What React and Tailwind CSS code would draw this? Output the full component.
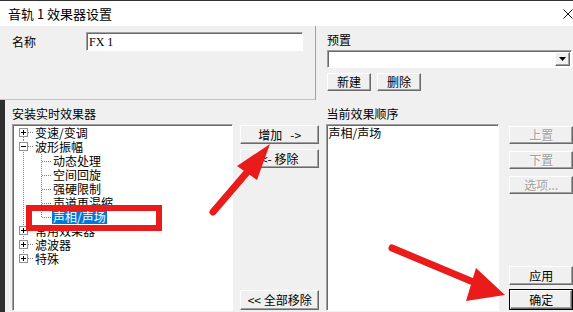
import React from "react";

const TREE = [
  { label: "变速/变调", level: 0, toggle: "+", first: true },
  { label: "波形振幅", level: 0, toggle: "-" },
  { label: "动态处理", level: 1 },
  { label: "空间回旋", level: 1 },
  { label: "强硬限制", level: 1 },
  { label: "声道再混缩", level: 1 },
  { label: "声相/声场", level: 1, lastChild: true, selected: true },
  { label: "常用效果器", level: 0, toggle: "+" },
  { label: "滤波器", level: 0, toggle: "+" },
  { label: "特殊", level: 0, toggle: "+", last: true },
];

const raised =
  "border border-t-white border-l-white border-b-[#696969] border-r-[#696969] shadow-[inset_-1px_-1px_0_#a0a0a0] bg-[#f0f0f0]";
const sunken =
  "border border-t-[#a0a0a0] border-l-[#a0a0a0] border-b-white border-r-white shadow-[inset_1px_1px_0_#696969] bg-white";

function Btn({ children, className = "", disabled, isDefault }) {
  const text = disabled ? "text-[#a0a0a0] [text-shadow:1px_1px_0_#fff]" : "text-black";
  if (isDefault) {
    return (
      <div className={`border border-black ${className}`}>
        <div className={`${raised} ${text} flex h-full w-full items-center justify-center leading-none`}>
          {children}
        </div>
      </div>
    );
  }
  return (
    <div className={`${raised} ${text} flex items-center justify-center leading-none ${className}`}>
      {children}
    </div>
  );
}

function Gutter({ row }) {
  const w = row.level === 0 ? 21 : 39;
  const dot = { stroke: "#808080", strokeDasharray: "1 1", shapeRendering: "crispEdges" };
  return (
    <svg width={w} height="14" className="shrink-0">
      <line x1="10.5" y1={row.first ? 7 : 0} x2="10.5" y2={row.last ? 7 : 14} style={dot} />
      {row.level === 0 ? (
        <>
          <line x1="15" y1="6.5" x2="20" y2="6.5" style={dot} />
          <rect x="6.5" y="2.5" width="8" height="8" fill="#fff" stroke="#919191" shapeRendering="crispEdges" />
          <line x1="8" y1="6.5" x2="13" y2="6.5" stroke="#000" shapeRendering="crispEdges" />
          {row.toggle === "+" && (
            <line x1="10.5" y1="4" x2="10.5" y2="9" stroke="#000" shapeRendering="crispEdges" />
          )}
        </>
      ) : (
        <>
          <line x1="28.5" y1="0" x2="28.5" y2={row.lastChild ? 7 : 14} style={dot} />
          <line x1="29" y1="7.5" x2="38" y2="7.5" style={dot} />
        </>
      )}
    </svg>
  );
}

export default function App() {
  return (
    <div className="relative h-[312px] w-[573px] overflow-hidden bg-[#f0f0f0] font-['Noto_Sans_CJK_SC','Noto_Sans',sans-serif] text-[12px] text-black">
      {/* title bar */}
      <div className="flex h-[26px] items-center justify-between border-t border-[#333] bg-white pl-2 pr-[0px]">
        <span className="text-[13px] leading-none">音轨 1 效果器设置</span>
        <svg width="10" height="10" className="mr-[0px]">
          <path d="M0.5 0.5 L9.5 9.5 M9.5 0.5 L0.5 9.5" stroke="#111" strokeWidth="1" />
        </svg>
      </div>

      {/* top part */}
      <div className="flex h-[74px]">
        <div className="flex w-[315px] items-start border-b border-[#c4c4c4] pl-3 pt-[6px]">
          <span className="w-[74px] leading-[19px]">名称</span>
          <div className={`${sunken} flex h-[19px] w-[217px] items-center pl-[2px] font-['Liberation_Serif',serif] text-[12px]`}>
            FX 1
          </div>
        </div>
        <div className="flex-1 border-l border-[#a0a0a0] pl-[11px] pt-[5px]">
          <div className="leading-[17px]">预置</div>
          <div className={`${sunken} mt-[2px] flex h-[18px] w-[245px] items-center justify-end pr-[1px]`}>
            <div className={`${raised} flex h-[14px] w-[15px] items-center justify-center`}>
              <svg width="7" height="4">
                <path d="M0 0 H7 L3.5 4 Z" fill="#000" />
              </svg>
            </div>
          </div>
          <div className="mt-[5px] flex gap-[6px]">
            <Btn className="h-[18px] w-[44px]">新建</Btn>
            <Btn className="h-[18px] w-[44px]">删除</Btn>
          </div>
        </div>
      </div>

      {/* bottom part */}
      <div className="flex h-[212px]">
        <div className="w-[5px] shrink-0 bg-[#2e2e2e]" />
        <div className="pl-[7px]">
          <div className="pt-[7px] leading-[14px] h-[24px]">安装实时效果器</div>
          <div className={`${sunken} h-[187px] w-[221px] pt-[1px]`}>
            {TREE.map((row) => (
              <div key={row.label} className="flex h-[14px] items-center leading-[14px]">
                <Gutter row={row} />
                <span className={`px-[1px] ${row.selected ? "bg-[#0078d7] text-white" : ""}`}>
                  {row.label}
                </span>
              </div>
            ))}
          </div>
        </div>

        <div className="ml-[7px] flex w-[80px] flex-col pb-[2px] pt-[25px]">
          <Btn className="h-[19px] w-full">增加&nbsp;&nbsp;&nbsp;-&gt;</Btn>
          <Btn className="mt-[5px] h-[19px] w-full">&lt;- 移除</Btn>
          <Btn className="mt-auto h-[20px] w-full">&lt;&lt; 全部移除</Btn>
        </div>

        <div className="ml-[7px]">
          <div className="h-[24px] pt-[7px] leading-[14px]">当前效果顺序</div>
          <div className={`${sunken} h-[187px] w-[173px] pl-[1px] pt-[1px] leading-[14px]`}>声相/声场</div>
        </div>

        <div className="ml-[10px] flex w-[64px] flex-col pb-[2px] pt-[26px]">
          <Btn disabled className="h-[18px] w-full">上置</Btn>
          <Btn disabled className="mt-[7px] h-[18px] w-full">下置</Btn>
          <Btn disabled className="mt-[7px] h-[18px] w-full">选项...</Btn>
          <Btn className="mt-auto h-[19px] w-full">应用</Btn>
          <Btn isDefault className="mt-[4px] h-[21px] w-full">确定</Btn>
        </div>
      </div>

      {/* red annotations */}
      <svg className="pointer-events-none absolute inset-0" width="573" height="312">
        <rect x="29" y="208" width="130" height="20" fill="none" stroke="#ea1b1b" strokeWidth="6" />
        <line x1="213" y1="212" x2="249" y2="170" stroke="#ea1b1b" strokeWidth="7" strokeLinecap="round" />
        <polygon points="270,144 237,166 257,180" fill="#ea1b1b" />
        <line x1="392" y1="248" x2="478" y2="284" stroke="#ea1b1b" strokeWidth="7" strokeLinecap="round" />
        <polygon points="505,295 476,268 466,301" fill="#ea1b1b" />
      </svg>
    </div>
  );
}
